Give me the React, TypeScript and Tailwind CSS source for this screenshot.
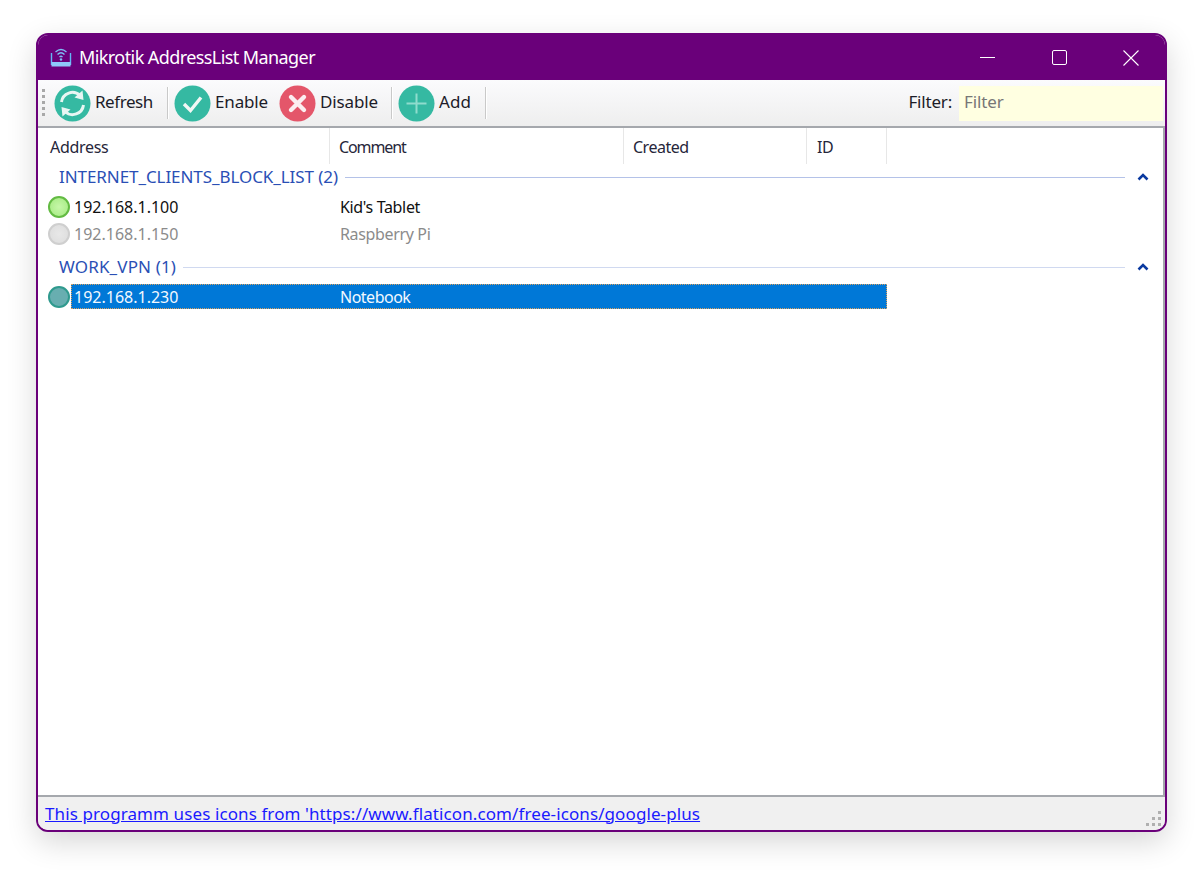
import React from "react";

const font = { fontFamily: "'Noto Sans', 'Open Sans', sans-serif" };

function Circle({ color, children }: { color: string; children: React.ReactNode }) {
  return (
    <svg width="37" height="37" viewBox="0 0 37 37" className="shrink-0">
      <circle cx="18.5" cy="18.5" r="18" fill={color} />
      {children}
    </svg>
  );
}

function RefreshIcon() {
  return (
    <Circle color="#35b9a2">
      <g fill="none" stroke="#e8f6f3" strokeWidth="3">
        <path d="M7.5 17 A11 11 0 0 1 26 10.5" />
        <path d="M29.5 20 A11 11 0 0 1 11 26.5" />
      </g>
      <path d="M28.5 5.5 L29.5 15 L20.5 12.5 Z" fill="#e8f6f3" />
      <path d="M8.5 31.5 L7.5 22 L16.5 24.5 Z" fill="#e8f6f3" />
    </Circle>
  );
}

function EnableIcon() {
  return (
    <Circle color="#35b9a2">
      <path d="M10 19 L16.5 25.5 L27 12.5" fill="none" stroke="#f2f7f5" strokeWidth="3.4" />
    </Circle>
  );
}

function DisableIcon() {
  return (
    <Circle color="#e4566a">
      <path d="M12 12 L25 25 M25 12 L12 25" fill="none" stroke="#fbeef0" strokeWidth="4.4" strokeLinecap="round" />
    </Circle>
  );
}

function AddIcon() {
  return (
    <Circle color="#35b9a2">
      <path d="M18.5 8.5 V28.5 M8.5 18.5 H28.5" fill="none" stroke="#8fdccd" strokeWidth="2" />
    </Circle>
  );
}

function AppIcon() {
  return (
    <svg width="22" height="20" viewBox="0 0 22 20" className="shrink-0" fill="none">
      <path d="M1.5 5 V17 M20.5 5 V17" stroke="#62b6f5" strokeWidth="1.4" />
      <rect x="1.5" y="14" width="19" height="4.5" fill="#8fc8fa" />
      <path d="M5.5 4 Q11 -1 16.5 4 M7.5 6.5 Q11 3 14.5 6.5 M9.5 9 Q11 7.5 12.5 9" stroke="#7dbdf5" strokeWidth="1.3" />
      <circle cx="11" cy="11.5" r="1.2" fill="#7dbdf5" />
    </svg>
  );
}

function Sep() {
  return <div className="w-px h-[32px] bg-[#c9c9c9] border-r border-white box-content shrink-0" />;
}

function ToolButton({
  icon,
  label,
  width,
  labelClass,
}: {
  icon: React.ReactNode;
  label: string;
  width: string;
  labelClass: string;
}) {
  return (
    <div className={`flex items-center text-[17px] text-[#1c1c28] ${width}`}>
      {icon}
      <span className={`-translate-y-px ${labelClass}`}>{label}</span>
    </div>
  );
}

function Group({ title, lineColor, titleClass }: { title: string; lineColor: string; titleClass: string }) {
  return (
    <div className="flex items-center h-[26px] pl-[21px] pr-[14px] text-[17px] text-[#2a4fb5]">
      <span className={titleClass}>{title}</span>
      <div className={`flex-1 h-px ml-[7px] mr-[12px] ${lineColor}`} />
      <svg width="12" height="8" viewBox="0 0 12 8" className="shrink-0">
        <path d="M1.5 6.5 L6 2 L10.5 6.5" fill="none" stroke="#0b3aa0" strokeWidth="2.6" />
      </svg>
    </div>
  );
}

function Row({
  dot,
  address,
  comment,
  text,
}: {
  dot: string;
  address: string;
  comment: string;
  text: string;
}) {
  return (
    <div className={`flex items-center h-[27px] pl-[10px] text-[16px] ${text}`}>
      <div className={`w-[22px] h-[22px] rounded-full border-2 shrink-0 ${dot}`} />
      <span className="ml-[4px] w-[266px]">{address}</span>
      <span className="tracking-[-0.35px]">{comment}</span>
    </div>
  );
}

export default function App() {
  return (
    <div className="w-[1204px] h-[876px] bg-white pt-[33px] pl-[36px] overflow-hidden" style={font}>
      <div className="w-[1131px] h-[799px] flex flex-col rounded-[12px] border-2 border-[#6a007a] bg-[#f0f0f0] overflow-hidden shadow-[0_10px_30px_rgba(0,0,0,0.16)]">
        <div className="h-[45px] shrink-0 bg-[#6a007a] flex items-center text-white">
          <div className="ml-[12px]">
            <AppIcon />
          </div>
          <span className="ml-[7px] text-[18px] tracking-[-0.58px]">Mikrotik AddressList Manager</span>
          <div className="ml-auto flex items-center">
            <div className="w-[71px] flex justify-center">
              <div className="w-[15px] h-px bg-white" />
            </div>
            <div className="w-[71px] flex justify-center pl-[2px]">
              <div className="w-[15px] h-[15px] rounded-[2px] border border-white" />
            </div>
            <div className="w-[71px] flex justify-center pl-[2px]">
              <svg width="16" height="16" viewBox="0 0 16 16">
                <path d="M.5 .5 L15.5 15.5 M15.5 .5 L.5 15.5" stroke="#fff" strokeWidth="1.1" />
              </svg>
            </div>
          </div>
        </div>

        <div className="h-[48px] shrink-0 flex items-center bg-gradient-to-b from-[#fbfbfd] to-[#eeeeee] border-b-2 border-[#a5a8ad]">
          <div className="ml-[4px] w-[3px] h-[29px] bg-[repeating-linear-gradient(to_bottom,#a8a8a8_0,#a8a8a8_3px,transparent_3px,transparent_6px)]" />
          <div className="ml-[9px]">
            <ToolButton icon={<RefreshIcon />} label="Refresh" width="w-[113px]" labelClass="ml-[4px] tracking-[-0.45px]" />
          </div>
          <Sep />
          <div className="ml-[5px]">
            <ToolButton icon={<EnableIcon />} label="Enable" width="w-[105px]" labelClass="ml-[4px] tracking-[-0.15px]" />
          </div>
          <ToolButton icon={<DisableIcon />} label="Disable" width="w-[112px]" labelClass="ml-[4px] tracking-[-0.15px]" />
          <Sep />
          <div className="ml-[5px]">
            <ToolButton icon={<AddIcon />} label="Add" width="w-[87px]" labelClass="ml-[4px] tracking-[0.1px]" />
          </div>
          <Sep />
          <span className="ml-auto text-[17px] text-[#1c1c28] tracking-[-0.2px] -translate-y-px">Filter:</span>
          <div className="ml-[7px] mr-[2px] w-[204px] h-[35px] bg-[#ffffe1] flex items-center pl-[5px] text-[17px] text-[#777] tracking-[-0.1px]">
            <span className="-translate-y-px">Filter</span>
          </div>
        </div>

        <div className="flex-1 bg-white border-b-2 border-r-2 border-[#a5a8ad] min-h-0">
          <div className="flex h-[36px] text-[16px] text-[#26263a] tracking-[-0.3px]">
            <div className="w-[292px] pl-[12px] pt-[2px] flex items-center border-r border-[#e7e7e7]">Address</div>
            <div className="w-[294px] pl-[9px] pt-[2px] flex items-center border-r border-[#e7e7e7] tracking-[-1.1px]">Comment</div>
            <div className="w-[183px] pl-[9px] pt-[2px] flex items-center border-r border-[#e7e7e7] tracking-[-0.5px]">Created</div>
            <div className="w-[80px] pl-[10px] pt-[2px] flex items-center border-r border-[#e7e7e7]">ID</div>
          </div>
          <Group title="INTERNET_CLIENTS_BLOCK_LIST (2)" lineColor="bg-[#b4c2e8]" titleClass="tracking-[-0.07px]" />
          <div className="mt-[3px]">
            <Row dot="bg-radial from-[#c6f7a9] to-[#a3ea7f] border-[#63bb43]" address="192.168.1.100" comment="Kid's Tablet" text="text-[#111]" />
            <Row dot="bg-radial from-[#e8e8e8] to-[#dcdcdc] border-[#cfcfcf]" address="192.168.1.150" comment="Raspberry Pi" text="text-[#8b8b8b]" />
          </div>
          <div className="mt-[7px]">
            <Group title="WORK_VPN (1)" lineColor="bg-[#d0d9f0]" titleClass="tracking-[0.15px]" />
          </div>
          <div className="flex items-center h-[27px] pl-[10px] text-[16px] text-[#f2f8ff] mt-[3px]">
            <div className="w-[22px] h-[22px] rounded-full border-2 shrink-0 bg-[#68aeb0] border-[#2f9a8e]" />
            <div className="w-[816px] h-[25px] ml-[1px] flex items-center bg-[#0078d7] border border-dotted border-[#d8a060]">
              <span className="ml-[2px] w-[266px]">192.168.1.230</span>
              <span className="tracking-[-0.5px]">Notebook</span>
            </div>
          </div>
        </div>

        <div className="h-[33px] shrink-0 bg-[#f0f0f0] flex items-center relative">
          <span className="ml-[7px] text-[17px] text-[#1a1aff] underline tracking-[0.1px]">
            This programm uses icons from 'https://www.flaticon.com/free-icons/google-plus
          </span>
          <svg width="18" height="18" viewBox="0 0 18 18" className="absolute right-[2px] bottom-[2px]" fill="#b0b0b0">
            <rect x="13" y="1" width="3" height="3" />
            <rect x="7" y="7" width="3" height="3" />
            <rect x="13" y="7" width="3" height="3" />
            <rect x="1" y="13" width="3" height="3" />
            <rect x="7" y="13" width="3" height="3" />
            <rect x="13" y="13" width="3" height="3" />
          </svg>
        </div>
      </div>
    </div>
  );
}
